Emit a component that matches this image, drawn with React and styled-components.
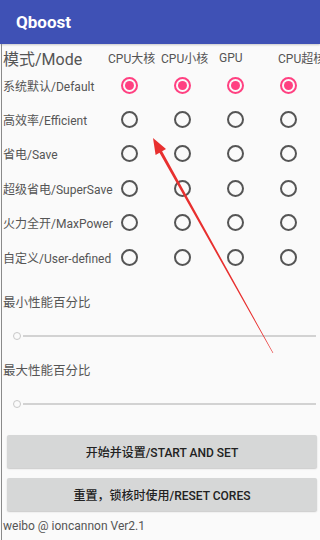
import React from 'react';
import styled, { createGlobalStyle } from 'styled-components';

const GlobalStyle = createGlobalStyle`
  html, body {
    margin: 0;
    padding: 0;
    background: #fafafa;
  }
  body {
    font-family: Roboto, 'Noto Sans CJK SC', sans-serif;
  }
`;

const Screen = styled.div`
  position: relative;
  width: 320px;
  height: 540px;
  overflow: hidden;
  background: #fafafa;
  display: flex;
  flex-direction: column;
`;

const AppBar = styled.header`
  height: 44px;
  flex: none;
  background: #3f51b5;
  color: #fff;
  display: flex;
  align-items: center;
  padding-left: 16px;
  font-size: 17px;
  font-weight: 700;
  box-shadow: 0 1px 2px rgba(0, 0, 0, 0.2);
`;

const Body = styled.main`
  flex: 1;
  margin-left: 1px;
  border-left: 1px solid #8a8a8a;
  padding-left: 1px;
  display: flex;
  flex-direction: column;
  color: #555;
`;

const HeadRow = styled.div`
  height: 24px;
  padding-top: 3px;
  box-sizing: border-box;
  display: flex;
  align-items: center;
  white-space: nowrap;
`;

const ModeTitle = styled.span`
  width: 105px;
  flex: none;
  font-size: 16px;
`;

const ColHead = styled.span`
  width: ${({ w }) => w}px;
  flex: none;
  font-size: 12px;
`;

const Grid = styled.div`
  display: grid;
  grid-template-columns: 100px repeat(4, 53px);
  grid-auto-rows: 34.4px;
  align-items: center;
`;

const RowLabel = styled.span`
  font-size: 12px;
  white-space: nowrap;
`;

const Radio = styled.span`
  justify-self: center;
  width: 17px;
  height: 17px;
  box-sizing: border-box;
  border-radius: 50%;
  border: 2px solid ${({ checked }) => (checked ? '#ff4081' : '#555')};
  display: flex;
  align-items: center;
  justify-content: center;

  &::after {
    content: '';
    width: 9px;
    height: 9px;
    border-radius: 50%;
    background: ${({ checked }) => (checked ? '#ff4081' : 'transparent')};
  }
`;

const Sliders = styled.section`
  margin-top: 10.6px;
`;

const SliderLabel = styled.div`
  height: 34px;
  display: flex;
  align-items: center;
  font-size: 12.5px;
`;

const SliderRow = styled.div`
  height: 34px;
  display: flex;
  align-items: center;
  padding-left: 10px;
  padding-right: 4px;
`;

const Thumb = styled.span`
  width: 8px;
  height: 8px;
  flex: none;
  box-sizing: border-box;
  border-radius: 50%;
  border: 1.5px solid #c8c8c8;
`;

const Track = styled.span`
  flex: 1;
  height: 2px;
  margin-left: 2px;
  background: #d2d2d2;
`;

const Buttons = styled.div`
  margin-top: 14px;
  padding: 0 3px 0 4px;
  display: flex;
  flex-direction: column;
  gap: 10px;
`;

const Button = styled.button`
  height: 33px;
  border: none;
  border-radius: 2px;
  background: #d6d7d7;
  color: #222;
  font-family: Roboto, 'Noto Sans CJK SC', sans-serif;
  font-size: 12px;
  font-weight: 500;
  box-shadow: 0 1px 1.5px rgba(0, 0, 0, 0.2);
`;

const Footer = styled.div`
  margin-top: 8px;
  font-size: 12px;
`;

const Overlay = styled.svg`
  position: absolute;
  left: 0;
  top: 0;
  pointer-events: none;
`;

const columns = [
  { name: 'CPU大核', w: 53 },
  { name: 'CPU小核', w: 58 },
  { name: 'GPU', w: 59 },
  { name: 'CPU超核', w: 60 },
];

const modes = [
  '系统默认/Default',
  '高效率/Efficient',
  '省电/Save',
  '超级省电/SuperSave',
  '火力全开/MaxPower',
  '自定义/User-defined',
];

const App = () => (
  <Screen>
    <GlobalStyle />
    <AppBar>Qboost</AppBar>
    <Body>
      <HeadRow>
        <ModeTitle>模式/Mode</ModeTitle>
        {columns.map(c => (
          <ColHead key={c.name} w={c.w}>{c.name}</ColHead>
        ))}
      </HeadRow>
      <Grid>
        {modes.map((m, i) => (
          <React.Fragment key={m}>
            <RowLabel>{m}</RowLabel>
            {columns.map(c => (
              <Radio key={c.name} checked={i === 0} />
            ))}
          </React.Fragment>
        ))}
      </Grid>
      <Sliders>
        <SliderLabel>最小性能百分比</SliderLabel>
        <SliderRow><Thumb /><Track /></SliderRow>
        <SliderLabel>最大性能百分比</SliderLabel>
        <SliderRow><Thumb /><Track /></SliderRow>
      </Sliders>
      <Buttons>
        <Button>开始并设置/START AND SET</Button>
        <Button>重置，锁核时使用/RESET CORES</Button>
      </Buttons>
      <Footer>weibo @ ioncannon Ver2.1</Footer>
    </Body>
    <Overlay width="320" height="540" viewBox="0 0 320 540">
      <polygon
        fill="#e8302f"
        points="153,138 166,149.1 162.1,151.3 273.3,352.9 272.7,353.1 159.5,152.7 155.6,154.9"
      />
    </Overlay>
  </Screen>
);

export default App;
